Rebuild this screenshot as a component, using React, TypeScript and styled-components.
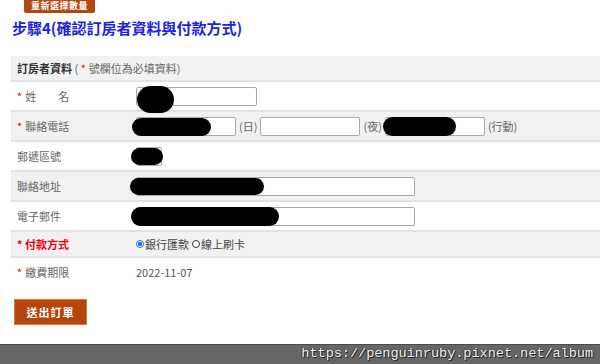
import styled, { createGlobalStyle } from "styled-components";

const GlobalStyle = createGlobalStyle`
    html, body {
        margin: 0;
        padding: 0;
        background: #fff;
        overflow: hidden;
    }
    body {
        font-family: "Noto Sans CJK TC", "Noto Sans", sans-serif;
    }
`;

const Page = styled.div`
    width: 600px;
    height: 364px;
    display: flex;
    flex-direction: column;
`;

const TopButton = styled.div`
    margin-left: 24px;
    width: 71px;
    height: 13px;
    background: #b5470f;
    border-radius: 0 0 2px 2px;
    color: #fff;
    font-size: 9px;
    font-weight: bold;
    line-height: 12px;
    text-align: center;
    letter-spacing: 0.5px;
`;

const Title = styled.h2`
    margin: 5px 0 0 12px;
    font-size: 15px;
    line-height: 20px;
    font-weight: bold;
    color: #1f1fe0;
`;

const Table = styled.div`
    margin: 18px 0 0 11px;
    display: flex;
    flex-direction: column;
`;

const Row = styled.div<{ $shade?: boolean; $h: number; $last?: boolean }>`
    display: flex;
    align-items: center;
    height: ${(p) => p.$h}px;
    background: ${(p) => (p.$shade ? "#f1f1f1" : "#fff")};
    border-bottom: ${(p) => (p.$last ? "none" : "2px solid #e2e2e2")};
    font-size: 11px;
    color: #666;
`;

const HeaderText = styled.div`
    padding-left: 6px;
    & > b {
        color: #333;
    }
`;

const Label = styled.div<{ $strong?: boolean }>`
    width: 125px;
    flex-shrink: 0;
    box-sizing: border-box;
    padding-left: 6px;
    color: ${(p) => (p.$strong ? "#e8000b" : "#666")};
    font-weight: ${(p) => (p.$strong ? "bold" : "normal")};
    white-space: pre;
`;

const Star = styled.span`
    color: #e8000b;
    margin-right: 3px;
`;

const Field = styled.div`
    position: relative;
    height: 100%;
    display: flex;
    align-items: center;
    gap: 3px;
`;

const TextBox = styled.input<{ $w: number }>`
    box-sizing: border-box;
    width: ${(p) => p.$w}px;
    height: 19px;
    border: 1px solid #a9a9a9;
    border-radius: 2px;
    background: #fff;
    padding: 0 3px;
    margin: 0;
    outline: none;
`;

const Unit = styled.span`
    color: #666;
`;

// redaction marks drawn over the inputs
const Blob = styled.div<{ $l: number; $t: number; $w: number; $h: number }>`
    position: absolute;
    left: ${(p) => p.$l}px;
    top: ${(p) => p.$t}px;
    width: ${(p) => p.$w}px;
    height: ${(p) => p.$h}px;
    background: #000;
    border-radius: 999px;
`;

const Radio = styled.span<{ $on?: boolean }>`
    display: inline-block;
    box-sizing: border-box;
    width: 8px;
    height: 8px;
    border-radius: 50%;
    border: 1px solid ${(p) => (p.$on ? "#1a73e8" : "#333")};
    background: ${(p) => (p.$on ? "radial-gradient(circle, #1a73e8 0 2px, #fff 2.5px)" : "#fff")};
    margin-right: 1px;
`;

const Choice = styled.span`
    display: inline-flex;
    align-items: center;
    color: #444;
`;

const DateText = styled.span`
    color: #555;
`;

const SubmitButton = styled.div`
    margin: 13px 0 0 14px;
    width: 73px;
    height: 26px;
    box-sizing: border-box;
    background: #b5450b;
    border: 1px solid #dc7a4c;
    color: #fff;
    font-size: 11px;
    font-weight: bold;
    letter-spacing: 1px;
    line-height: 24px;
    text-align: center;
`;

const Footer = styled.div`
    margin-top: auto;
    height: 19px;
    background: #666;
    border-top: 1px solid #4a4a4a;
    text-align: right;
    padding-right: 7px;
    font-family: "Liberation Mono", monospace;
    font-size: 13.5px;
    line-height: 18px;
    color: #f2f2f2;
    text-shadow: 1px 1px 0 #222, -1px 0 0 #333;
`;

const App = () => {
    return (
        <Page>
            <GlobalStyle />
            <TopButton>重新選擇數量</TopButton>
            <Title>步驟4(確認訂房者資料與付款方式)</Title>
            <Table>
                <Row $shade $h={24}>
                    <HeaderText>
                        <b>訂房者資料</b> ( <Star>*</Star>號欄位為必填資料)
                    </HeaderText>
                </Row>
                <Row $h={28}>
                    <Label>
                        <Star>*</Star>姓　　名
                    </Label>
                    <Field>
                        <TextBox $w={121} readOnly />
                        <Blob $l={1} $t={4} $w={37} $h={27} />
                    </Field>
                </Row>
                <Row $shade $h={28}>
                    <Label>
                        <Star>*</Star>聯絡電話
                    </Label>
                    <Field>
                        <TextBox $w={100} readOnly />
                        <Unit>(日)</Unit>
                        <TextBox $w={100} readOnly />
                        <Unit>(夜)</Unit>
                        <TextBox $w={100} readOnly />
                        <Unit>(行動)</Unit>
                        <Blob $l={-4} $t={6} $w={79} $h={18} />
                        <Blob $l={247} $t={5} $w={73} $h={19} />
                    </Field>
                </Row>
                <Row $h={28}>
                    <Label>郵遞區號</Label>
                    <Field>
                        <TextBox $w={26} readOnly />
                        <Blob $l={-5} $t={6} $w={32} $h={17} />
                    </Field>
                </Row>
                <Row $shade $h={28}>
                    <Label>聯絡地址</Label>
                    <Field>
                        <TextBox $w={279} readOnly />
                        <Blob $l={-6} $t={6} $w={134} $h={17} />
                    </Field>
                </Row>
                <Row $h={28}>
                    <Label>電子郵件</Label>
                    <Field>
                        <TextBox $w={279} readOnly />
                        <Blob $l={-5} $t={5} $w={148} $h={19} />
                    </Field>
                </Row>
                <Row $shade $h={24}>
                    <Label $strong>* 付款方式</Label>
                    <Field>
                        <Choice>
                            <Radio $on />
                            銀行匯款
                        </Choice>
                        <Choice>
                            <Radio />
                            線上刷卡
                        </Choice>
                    </Field>
                </Row>
                <Row $h={28} $last>
                    <Label>
                        <Star>*</Star>繳費期限
                    </Label>
                    <DateText>2022-11-07</DateText>
                </Row>
            </Table>
            <SubmitButton>送出訂單</SubmitButton>
            <Footer>https://penguinruby.pixnet.net/album</Footer>
        </Page>
    );
};

export default App;
